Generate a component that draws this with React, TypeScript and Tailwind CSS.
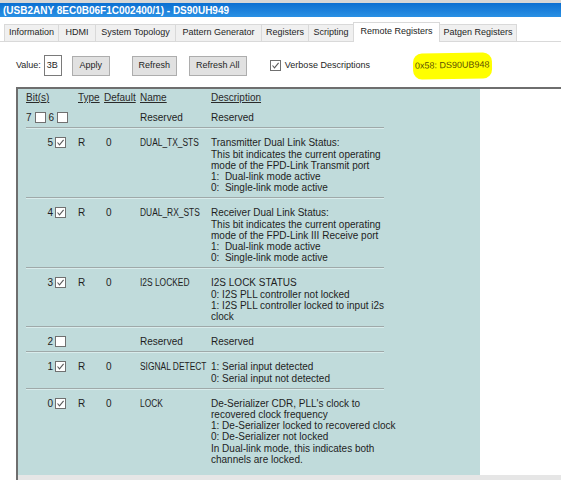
import React from "react";

interface Row {
  bit: string;
  checked: boolean;
  type: string;
  def: string;
  name: string;
  desc: string[];
}

const rows: Row[] = [
  {
    bit: "5",
    checked: true,
    type: "R",
    def: "0",
    name: "DUAL_TX_STS",
    desc: [
      "Transmitter Dual Link Status:",
      "This bit indicates the current operating",
      "mode of the FPD-Link Transmit port",
      "1:  Dual-link mode active",
      "0:  Single-link mode active",
    ],
  },
  {
    bit: "4",
    checked: true,
    type: "R",
    def: "0",
    name: "DUAL_RX_STS",
    desc: [
      "Receiver Dual Link Status:",
      "This bit indicates the current operating",
      "mode of the FPD-Link III Receive port",
      "1:  Dual-link mode active",
      "0:  Single-link mode active",
    ],
  },
  {
    bit: "3",
    checked: true,
    type: "R",
    def: "0",
    name: "I2S LOCKED",
    desc: [
      "I2S LOCK STATUS",
      "0: I2S PLL controller not locked",
      "1: I2S PLL controller locked to input i2s",
      "clock",
    ],
  },
  { bit: "2", checked: false, type: "", def: "", name: "Reserved", desc: ["Reserved"] },
  {
    bit: "1",
    checked: true,
    type: "R",
    def: "0",
    name: "SIGNAL DETECT",
    desc: ["1: Serial input detected", "0: Serial input not detected"],
  },
  {
    bit: "0",
    checked: true,
    type: "R",
    def: "0",
    name: "LOCK",
    desc: [
      "De-Serializer CDR, PLL's clock to",
      "recovered clock frequency",
      "1: De-Serializer locked to recovered clock",
      "0: De-Serializer not locked",
      "In Dual-link mode, this indicates both",
      "channels are locked.",
    ],
  },
];

const tabs = [
  { label: "Information", w: "w-[55px]" },
  { label: "HDMI", w: "w-[38px]" },
  { label: "System Topology", w: "w-[81px]" },
  { label: "Pattern Generator", w: "w-[87px]" },
  { label: "Registers", w: "w-[48px]" },
  { label: "Scripting", w: "w-[46px]" },
  { label: "Remote Registers", w: "w-[87px]", active: true },
  { label: "Patgen Registers", w: "w-[78px]" },
];

const Check = ({ checked }: { checked: boolean }) => (
  <svg width="11" height="11" viewBox="0 0 11 11" className="shrink-0">
    <rect x="0.5" y="0.5" width="10" height="10" fill="#fff" stroke="#707070" />
    {checked && (
      <polyline points="2.5,5.5 4.5,7.8 8.6,2.8" fill="none" stroke="#5a5a5a" strokeWidth="1.1" />
    )}
  </svg>
);

const Sep = () => (
  <div className="w-[358px] h-[2px] border-t border-[#9fa9a9] bg-[#d9ecec]" />
);

const Btn = ({ label, w }: { label: string; w: string }) => (
  <div className={`${w} h-[20px] flex items-center justify-center bg-[#e1e1e1] border border-[#adadad]`}>
    {label}
  </div>
);

export default function App() {
  return (
    <div className="w-[561px] h-[480px] overflow-hidden bg-white text-[#1e1e1e] font-['Liberation_Sans',Arial,sans-serif] text-[10px]">
      <div className="h-[3px] bg-[#d6d6d6]" />
      <div className="h-[14px] bg-gradient-to-b from-[#0a6fd1] to-[#2990e4] flex items-center pl-[3px] text-white font-bold text-[10px]">
        (USB2ANY 8EC0B06F1C002400/1) - DS90UH949
      </div>

      <div className="flex items-end h-[25px] pl-[4px] border-b border-[#d9d9d9] bg-white text-[9px]">
        {tabs.map((t) =>
          t.active ? (
            <div
              key={t.label}
              className={`${t.w} h-[20px] -mb-px -ml-px relative z-10 flex items-center justify-center bg-white border border-b-0 border-[#d9d9d9] pb-[2px]`}
            >
              {t.label}
            </div>
          ) : (
            <div
              key={t.label}
              className={`${t.w} h-[17px] flex items-center justify-center bg-[#f0f0f0] border border-b-0 border-[#d9d9d9] -ml-px first:ml-0`}
            >
              {t.label}
            </div>
          )
        )}
      </div>

      <div className="flex items-center h-[21px] mt-[13px] pl-[16px] text-[9px]">
        <span>Value:</span>
        <div className="ml-[3px] w-[18px] h-[21px] border border-[#7a7a7a] flex items-center pl-[2px]">3B</div>
        <div className="ml-[10px]">
          <Btn label="Apply" w="w-[38px]" />
        </div>
        <div className="ml-[22px]">
          <Btn label="Refresh" w="w-[45px]" />
        </div>
        <div className="ml-[12px]">
          <Btn label="Refresh All" w="w-[58px]" />
        </div>
        <div className="ml-[23px] flex items-center gap-[4px]">
          <Check checked />
          <span>Verbose Descriptions</span>
        </div>
        <div className="ml-[43px] bg-[#ffff00] rounded-[9px] px-[2px] py-[6px] text-[#5a5000] -rotate-1">
          0x58: DS90UB948
        </div>
      </div>

      <div className="mt-[11px] ml-[16px] border-t-2 border-l-2 border-[#6e6e6e] h-[400px] flex flex-col">
        <div className="flex h-[386px] shrink-0">
          <div className="w-[462px] bg-[#c0dbdb] pl-[8px] pt-[3px] leading-[11.2px]">
            <div className="flex text-[#2a2a2a] underline">
              <div className="w-[52px]">Bit(s)</div>
              <div className="w-[26px]">Type</div>
              <div className="w-[36px]">Default</div>
              <div className="w-[71px]">Name</div>
              <div>Description</div>
            </div>
            <div className="flex pt-[9px] pb-[4px]">
              <div className="w-[52px] flex items-center gap-[3px]">
                <span>7</span>
                <Check checked={false} />
                <span>6</span>
                <Check checked={false} />
              </div>
              <div className="w-[26px]" />
              <div className="w-[36px]" />
              <div className="w-[71px]">Reserved</div>
              <div>Reserved</div>
            </div>
            {rows.map((r) => (
              <div key={r.bit}>
                <Sep />
                <div className="flex pt-[8px] pb-[4px]">
                  <div className="w-[52px] pr-[12px] flex justify-end items-start gap-[2px]">
                    <span>{r.bit}</span>
                    <Check checked={r.checked} />
                  </div>
                  <div className="w-[26px]">{r.type}</div>
                  <div className="w-[36px] pl-[2px]">{r.def}</div>
                  <div className="w-[71px] whitespace-nowrap">
                    <span
                      className={`inline-block origin-left ${
                        r.name === "Reserved" ? "" : "scale-x-[0.84]"
                      }`}
                    >
                      {r.name}
                    </span>
                  </div>
                  <div>
                    {r.desc.map((d, i) => (
                      <div key={i} className="whitespace-pre">
                        {d}
                      </div>
                    ))}
                  </div>
                </div>
              </div>
            ))}
          </div>
          <div className="flex-1 bg-white" />
        </div>
        <div className="h-[12px] shrink-0 bg-[#e6e6e6]" />
      </div>
    </div>
  );
}
